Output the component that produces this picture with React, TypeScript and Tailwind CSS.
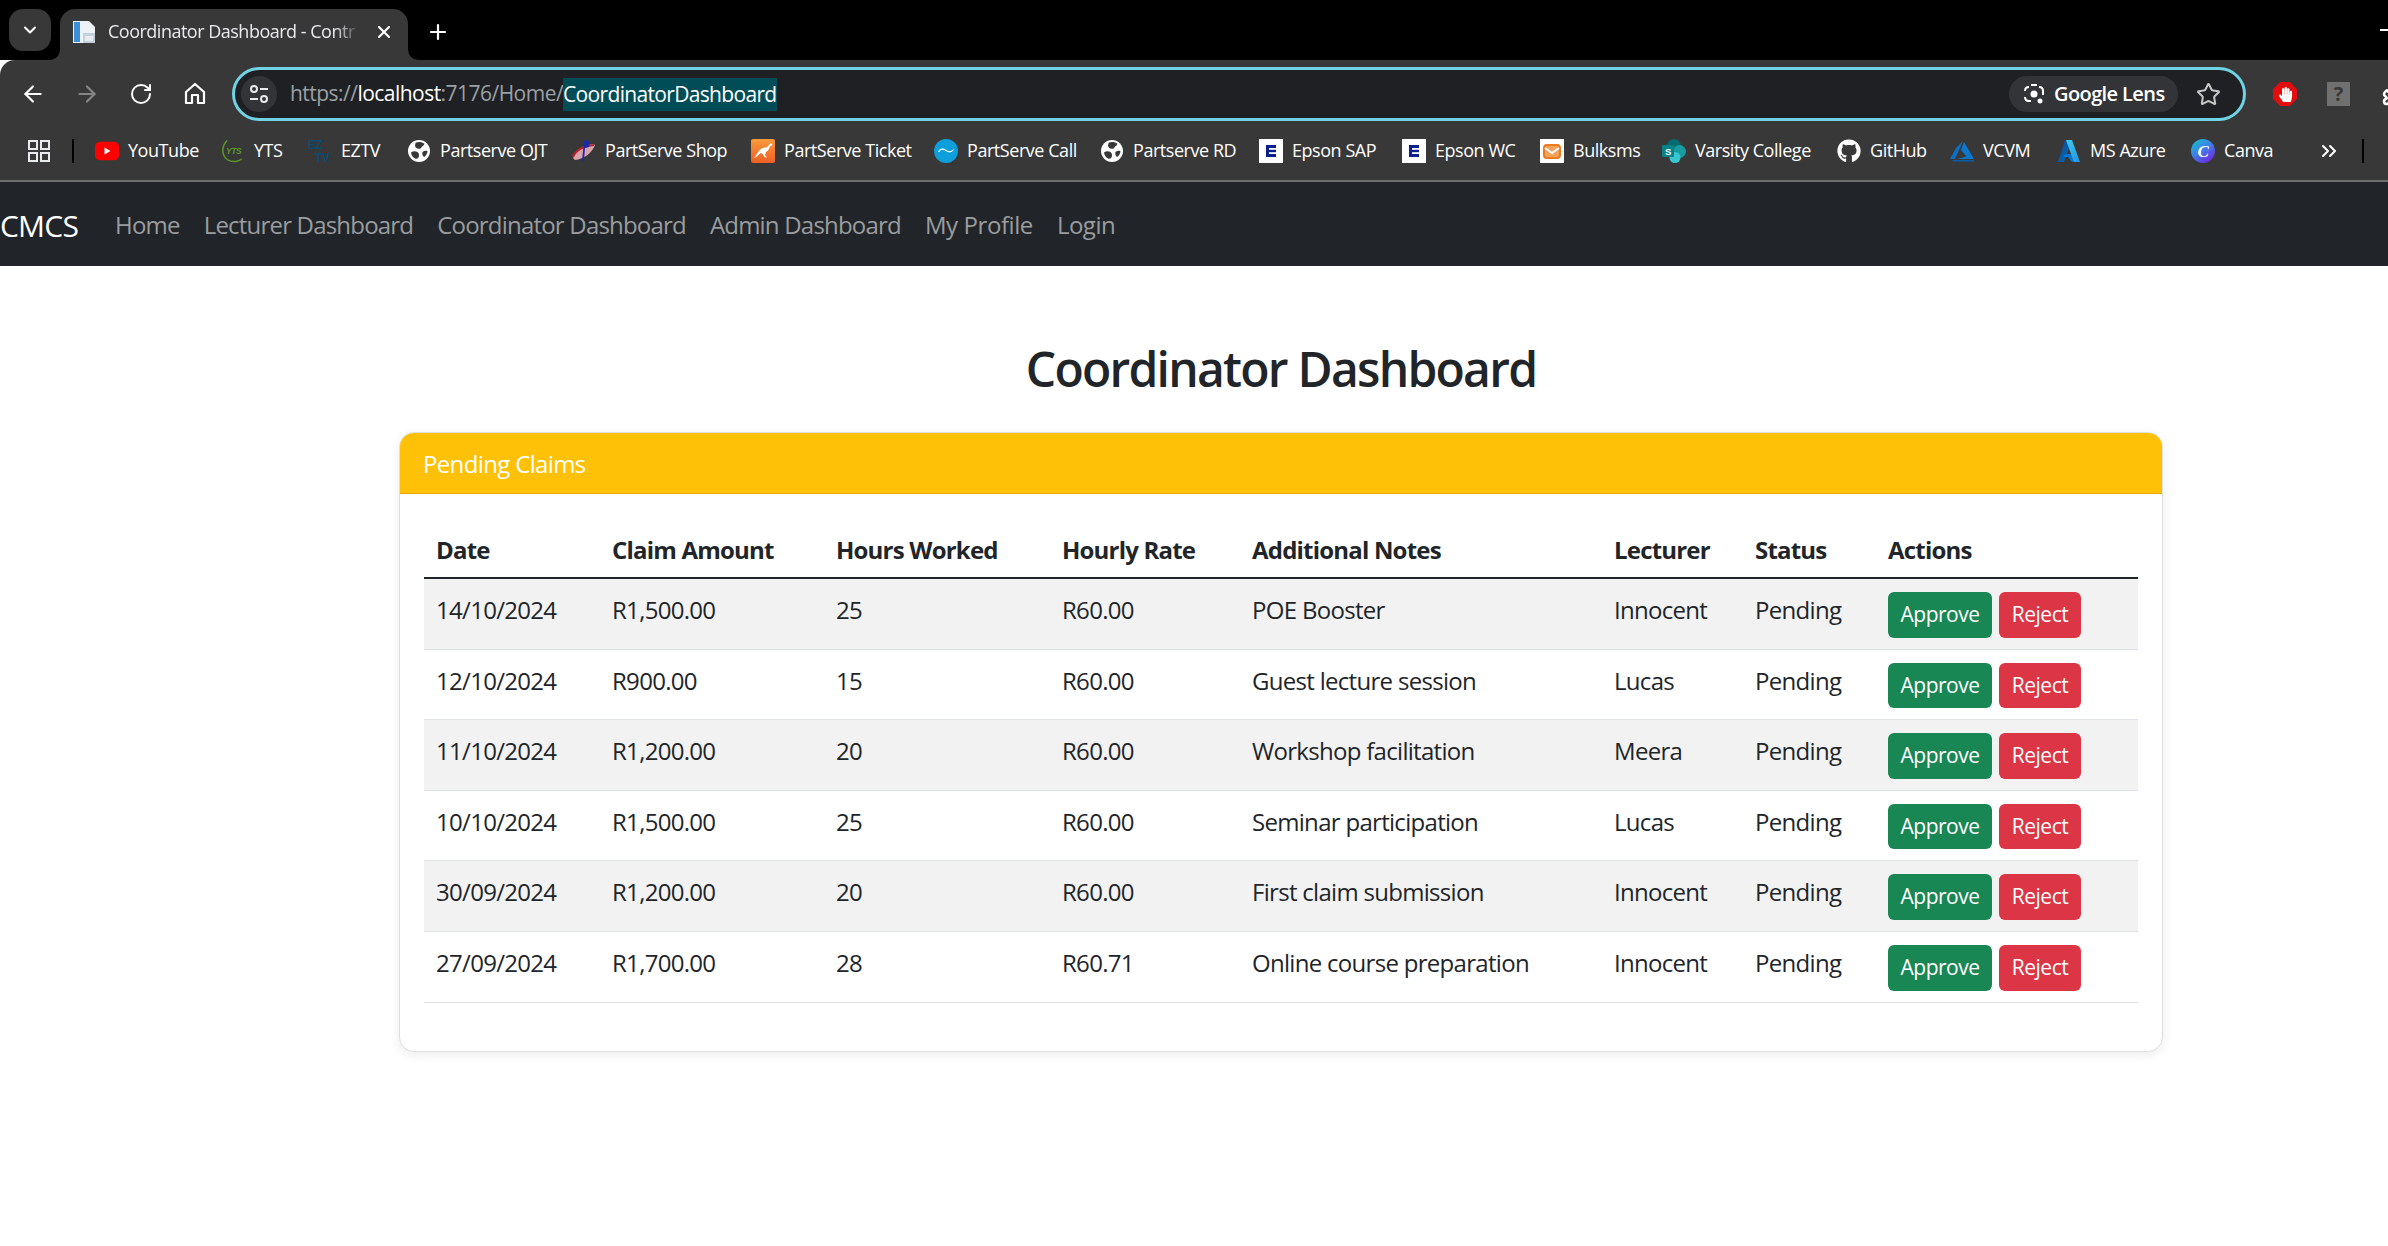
import React from "react";
import { ArrowLeft, ArrowRight, RotateCw, ChevronDown, X, Plus, ChevronsRight, Star, Puzzle } from "lucide-react";
import { FaGithub, FaHandPaper } from "react-icons/fa";

const Globe = () => (
  <svg viewBox="0 0 24 24" className="w-[24px] h-[24px]">
    <circle cx="12" cy="12" r="11" fill="#fff" />
    <path d="M9 3.500c3-1 6-.6 8.500 1.200-.6 2.200-2.500 2.400-3.500 4.200-1 1.700-3.600.8-5.200-.4C7.600 7 8 5 9 3.500zM4 13.500c2.200-1.700 5-1.600 6.700-.2 1.500 1.200 1.800 3.700.6 5.400-.7 1-1.800 1.400-3.200.8-2.200-1-3.700-3.200-4.100-6zM15.500 13c1.600-1.300 3.800-1.600 5-.9-.1 2.300-1.300 4.400-3.300 5.900-1.400-.4-2.400-3.200-1.700-5z" fill="#383838" />
  </svg>
);
const EpsonIcon = () => (
  <svg viewBox="0 0 24 24" className="w-[24px] h-[24px]">
    <rect width="24" height="24" fill="#fff" />
    <rect x="7" y="6" width="10" height="12" fill="#0b1f8f" />
    <rect x="10" y="9" width="7" height="1.800" fill="#fff" />
    <rect x="10" y="13.200" width="7" height="1.800" fill="#fff" />
  </svg>
);
const icons: Record<string, React.ReactNode> = {
  youtube: (
    <svg viewBox="0 0 24 24" className="w-[24px] h-[24px]">
      <rect x="0" y="0.500" width="24" height="23" rx="5.500" fill="#f00" transform="translate(0 2.400) scale(1 0.800)" />
      <path d="M9.500 8.500l6 3.500-6 3.500z" fill="#fff" />
    </svg>
  ),
  yts: (
    <svg viewBox="0 0 24 24" className="w-[24px] h-[24px]">
      <path d="M6 1.500C2 6 1 11 2.500 15.500c1.500 4.500 6 7.500 12 7 2.500-.3 4.500-1.200 6-2.500" fill="none" stroke="#5a9a2a" strokeWidth="1.500" />
      <text x="5" y="15" fontSize="8.500" fontWeight="700" fontStyle="italic" fill="#5a9a2a" fontFamily="Liberation Sans, sans-serif">YTS</text>
    </svg>
  ),
  eztv: (
    <svg viewBox="0 0 24 24" className="w-[24px] h-[24px]">
      <text x="0" y="10" fontSize="12" fontWeight="700" fill="#0a4a73" fontFamily="Liberation Sans, sans-serif">EZ</text>
      <text x="7" y="23" fontSize="12" fontWeight="700" fill="#0a4a73" fontFamily="Liberation Sans, sans-serif">TV</text>
    </svg>
  ),
  globe: <Globe />,
  shop: (
    <svg viewBox="0 0 24 24" className="w-[24px] h-[24px]">
      <path d="M1 19C3 12 10 6 21 5l2 1c-3 8-11 14-20 15z" fill="#d9a3ad" />
      <path d="M1 18C4 11 11 7 22 6" fill="none" stroke="#c0202a" strokeWidth="2" />
      <path d="M12 2l3-1 3 3-1 4-4 1-1 13h-2l2-20z" fill="#1a2aa8" />
    </svg>
  ),
  ticket: (
    <svg viewBox="0 0 24 24" className="w-[24px] h-[24px]">
      <defs>
        <linearGradient id="tk" x1="0" y1="0" x2="0" y2="1">
          <stop offset="0" stopColor="#f99a3c" />
          <stop offset="1" stopColor="#ee5f24" />
        </linearGradient>
      </defs>
      <rect width="24" height="24" rx="2" fill="url(#tk)" />
      <path d="M20 4l1.500 2-2 1-1.500 2.500c-.5 2-2 3-3 3.500l-1 3 2 2.500h-2l-2-3c-1-1-1.500-1.500-2-1.500-2 1-4 4-7 5 2-2 3-5 5-7 2-3 5-3.500 7-3.500 1 0 2-1.500 3-2.500z" fill="#fff" />
    </svg>
  ),
  call: (
    <svg viewBox="0 0 24 24" className="w-[24px] h-[24px]">
      <circle cx="12" cy="12" r="12" fill="#0d9fdc" />
      <path d="M4.500 13c2-3.500 4.500-3.500 7.500-1.500s5.500 2 7.500-1" fill="none" stroke="#fff" strokeWidth="1.200" />
    </svg>
  ),
  epson: <EpsonIcon />,
  bulksms: (
    <svg viewBox="0 0 24 24" className="w-[24px] h-[24px]">
      <rect width="24" height="24" fill="#fff" />
      <rect x="4" y="6" width="16" height="13" rx="3" fill="#f5a25a" stroke="#ee7a20" strokeWidth="2" />
      <path d="M5 9l7 5 7-5" fill="none" stroke="#fff" strokeWidth="2" />
    </svg>
  ),
  varsity: (
    <svg viewBox="0 0 24 24" className="w-[24px] h-[24px]">
      <circle cx="12" cy="7" r="7" fill="#036c70" />
      <circle cx="17.500" cy="12.500" r="6.500" fill="#1a9ba1" />
      <circle cx="13" cy="18.500" r="5.500" fill="#37c6d0" />
      <rect x="0" y="6" width="12" height="12" rx="1" fill="#038387" />
      <text x="3" y="15.500" fontSize="9.500" fontWeight="700" fill="#fff" fontFamily="Liberation Sans, sans-serif">S</text>
    </svg>
  ),
  github: <FaGithub className="w-[24px] h-[24px] text-white" />,
  vcvm: (
    <svg viewBox="0 0 24 24" className="w-[24px] h-[24px]">
      <path d="M13 2L6 9 0 20h5z" fill="#0a6fc4" />
      <path d="M14 3l-3 8 5.500 6.500L7 20l17 0z" fill="#0a78d0" />
      <path d="M2 21h22v1.500H3z" fill="#0a5ca8" />
    </svg>
  ),
  azure: (
    <svg viewBox="0 0 24 24" className="w-[24px] h-[24px]">
      <defs>
        <linearGradient id="az" x1="0" y1="0" x2="1" y2="1">
          <stop offset="0" stopColor="#114a8b" />
          <stop offset="1" stopColor="#0669bc" />
        </linearGradient>
        <linearGradient id="az2" x1="0" y1="0" x2="1" y2="1">
          <stop offset="0" stopColor="#3ccbf4" />
          <stop offset="1" stopColor="#2892df" />
        </linearGradient>
      </defs>
      <path d="M8 1h7L7 23H1z" fill="url(#az)" />
      <path d="M17 15H8l-2 3 5 0 4 5h6z" fill="#0078d4" />
      <path d="M9 1h6l8 22h-6z" fill="url(#az2)" />
    </svg>
  ),
  canva: (
    <svg viewBox="0 0 24 24" className="w-[24px] h-[24px]">
      <defs>
        <linearGradient id="cv" x1="0" y1="0" x2="0.700" y2="1">
          <stop offset="0" stopColor="#10c5c8" />
          <stop offset="0.500" stopColor="#3d83e8" />
          <stop offset="1" stopColor="#6d2be0" />
        </linearGradient>
      </defs>
      <circle cx="12" cy="12" r="12" fill="url(#cv)" />
      <text x="6.500" y="18" fontSize="17" fontStyle="italic" fontWeight="700" fill="#fff" fontFamily="Liberation Serif, serif">C</text>
    </svg>
  ),
};

const bookmarks = [
  { icon: "youtube", label: "YouTube", w: "w-[126px]" },
  { icon: "yts", label: "YTS", w: "w-[87px]" },
  { icon: "eztv", label: "EZTV", w: "w-[99px]" },
  { icon: "globe", label: "Partserve OJT", w: "w-[165px]" },
  { icon: "shop", label: "PartServe Shop", w: "w-[179px]" },
  { icon: "ticket", label: "PartServe Ticket", w: "w-[183px]" },
  { icon: "call", label: "PartServe Call", w: "w-[166px]" },
  { icon: "globe", label: "Partserve RD", w: "w-[159px]" },
  { icon: "epson", label: "Epson SAP", w: "w-[143px]" },
  { icon: "epson", label: "Epson WC", w: "w-[138px]" },
  { icon: "bulksms", label: "Bulksms", w: "w-[122px]" },
  { icon: "varsity", label: "Varsity College", w: "w-[175px]" },
  { icon: "github", label: "GitHub", w: "w-[113px]" },
  { icon: "vcvm", label: "VCVM", w: "w-[107px]" },
  { icon: "azure", label: "MS Azure", w: "w-[134px]" },
  { icon: "canva", label: "Canva", w: "w-[126px]" },
];

const claims = [
  ["14/10/2024", "R1,500.00", "25", "R60.00", "POE Booster", "Innocent"],
  ["12/10/2024", "R900.00", "15", "R60.00", "Guest lecture session", "Lucas"],
  ["11/10/2024", "R1,200.00", "20", "R60.00", "Workshop facilitation", "Meera"],
  ["10/10/2024", "R1,500.00", "25", "R60.00", "Seminar participation", "Lucas"],
  ["30/09/2024", "R1,200.00", "20", "R60.00", "First claim submission", "Innocent"],
  ["27/09/2024", "R1,700.00", "28", "R60.71", "Online course preparation", "Innocent"],
];

const headers = [
  { t: "Date", w: "w-[176px]" },
  { t: "Claim Amount", w: "w-[224px]" },
  { t: "Hours Worked", w: "w-[226px]" },
  { t: "Hourly Rate", w: "w-[190px]" },
  { t: "Additional Notes", w: "w-[362px]" },
  { t: "Lecturer", w: "w-[141px]" },
  { t: "Status", w: "w-[133px]" },
  { t: "Actions", w: "w-[262px]" },
];

const navLinks = [
  { t: "Home", c: "tracking-[-0.8px]" },
  { t: "Lecturer Dashboard", c: "tracking-[-0.8px]" },
  { t: "Coordinator Dashboard", c: "tracking-[-0.8px]" },
  { t: "Admin Dashboard", c: "tracking-[-0.8px]" },
  { t: "My Profile", c: "tracking-[-0.42px]" },
  { t: "Login", c: "tracking-[-0.5px]" },
];

export default function App() {
  return (
    <div className="w-[2388px] h-[1246px] overflow-hidden bg-white font-['Open_Sans','Noto_Sans',sans-serif]">
      {/* tab strip */}
      <div className="h-[60px] bg-black flex items-end relative">
        <div className="ml-[9px] mb-[9px] w-[42px] h-[42px] rounded-[14px] bg-[#383838] flex items-center justify-center text-white">
          <ChevronDown size={20} strokeWidth={2.5} />
        </div>
        <div className="relative ml-[9px] w-[348px] h-[51px] rounded-t-[15px] bg-[#383838] flex items-center pl-[12px] pb-[6px] text-white">
          <svg viewBox="0 0 12 12" className="absolute right-full bottom-0 w-[12px] h-[12px]">
            <path d="M12 0C12 8 8 12 0 12H12z" fill="#383838" />
          </svg>
          <svg viewBox="0 0 12 12" className="absolute left-full bottom-0 w-[12px] h-[12px]">
            <path d="M0 0C0 8 4 12 12 12H0z" fill="#383838" />
          </svg>
          <svg viewBox="0 0 24 24" className="w-[24px] h-[24px] shrink-0">
            <path d="M1 1h16l6 6v16H1z" fill="#eef2f6" />
            <rect x="2" y="2" width="6" height="20" fill="#3a8fd6" />
            <rect x="11" y="13" width="12" height="10" fill="#c4d0dc" />
            <rect x="13" y="16" width="8" height="5" fill="#e6ecf2" />
          </svg>
          <span className="ml-[12px] w-[252px] overflow-hidden whitespace-nowrap text-[18px] tracking-[-0.5px] text-[#e8eaed] [mask-image:linear-gradient(to_right,black_90%,transparent)]">Coordinator Dashboard - Contr</span>
          <X size={20} strokeWidth={2.5} className="ml-[14px] shrink-0" />
        </div>
        <Plus size={24} strokeWidth={2.2} className="ml-[18px] mb-[16px] text-white" />
        <div className="absolute right-0 top-[29px] w-[8px] h-[2px] bg-white" />
      </div>

      {/* toolbar */}
      <div className="h-[61px] pt-[7px] bg-[#383838] rounded-tl-[15px] flex items-center text-white overflow-hidden">
        <ArrowLeft size={26} strokeWidth={2} className="ml-[20px] shrink-0" />
        <ArrowRight size={26} strokeWidth={2} className="ml-[28px] shrink-0 text-[#858585]" />
        <RotateCw size={24} strokeWidth={2} className="ml-[29px] shrink-0" />
        <svg viewBox="0 0 24 24" className="ml-[30px] w-[24px] h-[24px] shrink-0" fill="none" stroke="#fff" strokeWidth="2.2">
          <path d="M3 21V10l9-8 9 8v11h-6v-8H9v8z" strokeLinejoin="round" />
        </svg>
        <div className="ml-[25px] w-[2014px] h-[54px] shrink-0 rounded-full border-[3px] border-[#6fd3e3] bg-[#1f2023] flex items-center pl-[6px] pr-[22px]">
          <div className="w-[36px] h-[36px] rounded-full bg-[#333437] flex items-center justify-center shrink-0">
            <svg viewBox="0 0 24 24" className="w-[24px] h-[24px]" fill="none" stroke="#e8eaed" strokeWidth="2">
              <circle cx="7" cy="7" r="3" />
              <path d="M13 7h8M3 17h8" />
              <circle cx="17" cy="17" r="3" />
            </svg>
          </div>
          <div className="ml-[13px] text-[21px] tracking-[-0.53px] whitespace-nowrap text-[#9aa0a6] flex items-center">
            <span>https://</span>
            <span className="text-white">localhost</span>
            <span>:7176/Home/</span>
            <span className="bg-[#004d57] text-white h-[33px] leading-[33px] tracking-[-0.67px]">CoordinatorDashboard</span>
          </div>
          <div className="ml-auto h-[36px] w-[169px] rounded-full bg-[#333437] flex items-center pl-[13px] text-white shrink-0">
            <svg viewBox="0 0 24 24" className="w-[24px] h-[24px] shrink-0" fill="none" stroke="#fff" strokeWidth="2">
              <path d="M9 3h6M3 9c0-3 1-4 4-4M21 9c0-3-1-4-4-4M3 15c0 3 1 4 4 4h2M21 13V9" />
              <circle cx="12" cy="12" r="2.5" fill="#fff" />
              <circle cx="18" cy="19" r="1.5" fill="#fff" />
            </svg>
            <span className="ml-[8px] text-[20px] font-semibold tracking-[-0.6px] whitespace-nowrap">Google Lens</span>
          </div>
          <Star size={25} strokeWidth={2} className="ml-[18px] shrink-0 text-[#c4c7c5]" />
        </div>
        <div className="ml-[27px] w-[24px] h-[24px] shrink-0 bg-[#e40c0c] flex items-center justify-center [clip-path:polygon(30%_0,70%_0,100%_30%,100%_70%,70%_100%,30%_100%,0_70%,0_30%)]">
          <FaHandPaper className="w-[15px] h-[15px] text-white" />
        </div>
        <div className="ml-[30px] w-[23px] h-[24px] shrink-0 bg-[#707070] flex items-center justify-center text-[#383838] text-[20px] font-bold">?</div>
        <Puzzle size={24} strokeWidth={2.5} className="ml-[32px] shrink-0 text-white" />
      </div>

      {/* bookmarks */}
      <div className="h-[59px] bg-[#383838] flex items-center text-white text-[18px] tracking-[-0.45px]">
        <svg viewBox="0 0 22 22" className="ml-[28px] w-[22px] h-[22px] shrink-0" fill="none" stroke="#e8eaed" strokeWidth="2">
          <rect x="1" y="1" width="8" height="8" />
          <rect x="13" y="1" width="8" height="8" />
          <rect x="1" y="13" width="8" height="8" />
          <rect x="13" y="13" width="8" height="8" />
        </svg>
        <div className="ml-[22px] w-[2px] h-[24px] bg-black shrink-0" />
        <div className="ml-[21px] flex items-center">
          {bookmarks.map((b, i) => (
            <div key={i} className={`${b.w} shrink-0 flex items-center gap-[9px] whitespace-nowrap`}>
              <span className="w-[24px] h-[24px] shrink-0 flex items-center justify-center">{icons[b.icon]}</span>
              <span>{b.label}</span>
            </div>
          ))}
        </div>
        <ChevronsRight size={24} strokeWidth={2} className="shrink-0" />
        <div className="ml-[21px] w-[2px] h-[24px] bg-black shrink-0" />
      </div>
      <div className="h-[2px] bg-[#6e6e6e]" />

      {/* navbar */}
      <nav className="h-[84px] pt-[2px] bg-[#212529] flex items-center whitespace-nowrap">
        <span className="text-[30px] text-white tracking-[-0.8px]">CMCS</span>
        <ul className="ml-[25px] flex items-center text-[24px] text-[#9a9c9e]">
          {navLinks.map((l) => (
            <li key={l.t} className={`px-[12px] ${l.c}`}>{l.t}</li>
          ))}
        </ul>
      </nav>

      {/* main */}
      <main className="ml-[399px] w-[1764px] pt-[74px] text-[#212529]">
        <h1 className="text-center text-[48px] leading-[58px] font-semibold tracking-[-1.75px] mb-[34px]">Coordinator Dashboard</h1>
        <div className="rounded-[15px] border border-[#dfdfdf] bg-white shadow-[0_3px_12px_rgba(0,0,0,0.08)] overflow-hidden">
          <div className="h-[61px] pt-[2px] bg-[#ffc107] border-b border-[#e2ac08] flex items-center px-[23px] text-[24px] tracking-[-0.65px] text-white">Pending Claims</div>
          <div className="p-[24px] pb-[48px]">
            <table className="w-[1714px] table-fixed border-collapse text-[24px] tracking-[-0.7px]">
              <thead>
                <tr className="border-b-2 border-[#212529]">
                  {headers.map((h) => (
                    <th key={h.t} className={`${h.w} px-[12px] pt-[4px] h-[60px] text-left font-bold tracking-[-0.8px] whitespace-nowrap`}>{h.t}</th>
                  ))}
                </tr>
              </thead>
              <tbody>
                {claims.map((c, i) => (
                  <tr key={i} className={`border-b border-[#dee2e6] ${i % 2 === 0 ? "bg-[#f2f2f2]" : "bg-white"}`}>
                    {c.map((v, j) => (
                      <td key={j} className="px-[12px] pt-[13px] pb-[11px] align-top leading-[36px] whitespace-nowrap">{v}</td>
                    ))}
                    <td className="px-[12px] pt-[13px] pb-[11px] align-top leading-[36px]">Pending</td>
                    <td className="px-[12px] pt-[13px] pb-[11px] align-top">
                      <div className="flex gap-[7px]">
                        <button className="w-[104px] h-[45.6px] rounded-[6px] bg-[#198754] text-white text-[21px] tracking-[-0.5px]">Approve</button>
                        <button className="w-[82px] h-[45.6px] rounded-[6px] bg-[#dc3545] text-white text-[21px] tracking-[-0.5px]">Reject</button>
                      </div>
                    </td>
                  </tr>
                ))}
              </tbody>
            </table>
          </div>
        </div>
      </main>
    </div>
  );
}
